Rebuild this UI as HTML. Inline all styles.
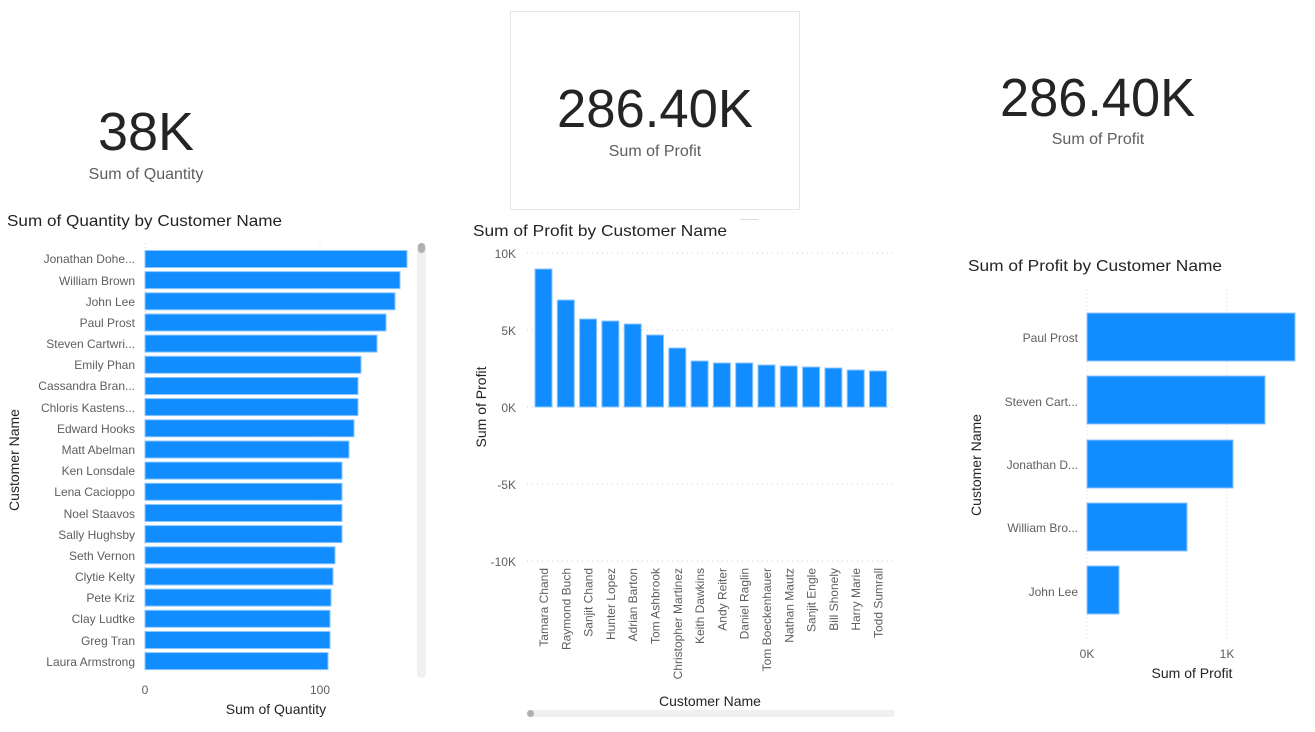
<!DOCTYPE html>
<html><head><meta charset="utf-8"><style>
html,body{margin:0;padding:0;background:#fff;}
svg{display:block;font-family:"Liberation Sans",sans-serif;}
</style></head><body>
<svg width="1315" height="732" viewBox="0 0 1315 732" xmlns="http://www.w3.org/2000/svg">
<text x="98" y="150" font-size="54" fill="#252423" textLength="96" lengthAdjust="spacingAndGlyphs">38K</text>
<text x="146" y="179" font-size="16" fill="#605e5c" text-anchor="middle">Sum of Quantity</text>
<rect x="510.5" y="11.5" width="289" height="198" fill="none" stroke="#e6e6e6"/>
<text x="557" y="127" font-size="54" fill="#252423" textLength="196" lengthAdjust="spacingAndGlyphs">286.40K</text>
<text x="655" y="156" font-size="16" fill="#605e5c" text-anchor="middle">Sum of Profit</text>
<line x1="740" y1="219.5" x2="758" y2="219.5" stroke="#ddd"/>
<text x="1000" y="116" font-size="54" fill="#252423" textLength="195" lengthAdjust="spacingAndGlyphs">286.40K</text>
<text x="1098" y="144" font-size="16" fill="#605e5c" text-anchor="middle">Sum of Profit</text>

<text x="7" y="226" font-size="16" fill="#252423" textLength="275" lengthAdjust="spacingAndGlyphs">Sum of Quantity by Customer Name</text>
<g stroke="#ddd" stroke-dasharray="1,3"><line x1="145" y1="243" x2="145" y2="673"/><line x1="320" y1="243" x2="320" y2="673"/></g>
<g fill="#118dff" stroke="#8cc6ff" stroke-width="1">
<rect x="145" y="250.5" width="262" height="17"/>
<rect x="145" y="271.6" width="255" height="17"/>
<rect x="145" y="292.8" width="250" height="17"/>
<rect x="145" y="314" width="241" height="17"/>
<rect x="145" y="335.1" width="232" height="17"/>
<rect x="145" y="356.3" width="216" height="17"/>
<rect x="145" y="377.5" width="213" height="17"/>
<rect x="145" y="398.6" width="213" height="17"/>
<rect x="145" y="419.8" width="209" height="17"/>
<rect x="145" y="441" width="204" height="17"/>
<rect x="145" y="462.1" width="197" height="17"/>
<rect x="145" y="483.3" width="197" height="17"/>
<rect x="145" y="504.5" width="197" height="17"/>
<rect x="145" y="525.6" width="197" height="17"/>
<rect x="145" y="546.8" width="190" height="17"/>
<rect x="145" y="568" width="188" height="17"/>
<rect x="145" y="589.1" width="186" height="17"/>
<rect x="145" y="610.3" width="185" height="17"/>
<rect x="145" y="631.5" width="185" height="17"/>
<rect x="145" y="652.6" width="183" height="17"/>
</g>
<g font-size="12" fill="#605e5c" text-anchor="end">
<text x="135" y="263">Jonathan Dohe...</text>
<text x="135" y="285">William Brown</text>
<text x="135" y="306">John Lee</text>
<text x="135" y="327">Paul Prost</text>
<text x="135" y="348">Steven Cartwri...</text>
<text x="135" y="369">Emily Phan</text>
<text x="135" y="390">Cassandra Bran...</text>
<text x="135" y="412">Chloris Kastens...</text>
<text x="135" y="433">Edward Hooks</text>
<text x="135" y="454">Matt Abelman</text>
<text x="135" y="475">Ken Lonsdale</text>
<text x="135" y="496">Lena Cacioppo</text>
<text x="135" y="518">Noel Staavos</text>
<text x="135" y="539">Sally Hughsby</text>
<text x="135" y="560">Seth Vernon</text>
<text x="135" y="581">Clytie Kelty</text>
<text x="135" y="602">Pete Kriz</text>
<text x="135" y="623">Clay Ludtke</text>
<text x="135" y="645">Greg Tran</text>
<text x="135" y="666">Laura Armstrong</text>
</g>
<rect x="417" y="243" width="9" height="435" rx="4" fill="#f0f0f0"/>
<rect x="418" y="243" width="7" height="10" rx="3.5" fill="#b0b0b0"/>
<text x="145" y="694" font-size="12" fill="#605e5c" text-anchor="middle">0</text>
<text x="320" y="694" font-size="12" fill="#605e5c" text-anchor="middle">100</text>
<text x="276" y="714" font-size="14" fill="#252423" text-anchor="middle">Sum of Quantity</text>
<text transform="translate(19,460) rotate(-90)" font-size="14" fill="#252423" text-anchor="middle">Customer Name</text>

<text x="473" y="236" font-size="16" fill="#252423" textLength="254" lengthAdjust="spacingAndGlyphs">Sum of Profit by Customer Name</text>
<g stroke="#ccc" stroke-dasharray="1,4">
<line x1="527" y1="253" x2="895" y2="253"/><line x1="527" y1="330" x2="895" y2="330"/><line x1="527" y1="407" x2="895" y2="407"/><line x1="527" y1="484" x2="895" y2="484"/><line x1="527" y1="561" x2="895" y2="561"/>
</g>
<g font-size="12" fill="#605e5c" text-anchor="end">
<text x="516" y="258">10K</text><text x="516" y="335">5K</text><text x="516" y="412">0K</text><text x="516" y="489">-5K</text><text x="516" y="566">-10K</text>
</g>
<g fill="#118dff" stroke="#8cc6ff" stroke-width="1">
<rect x="535" y="269" width="17" height="138"/>
<rect x="557.3" y="300" width="17" height="107"/>
<rect x="579.6" y="319" width="17" height="88"/>
<rect x="601.9" y="321" width="17" height="86"/>
<rect x="624.2" y="324" width="17" height="83"/>
<rect x="646.5" y="335" width="17" height="72"/>
<rect x="668.8" y="348" width="17" height="59"/>
<rect x="691.1" y="361" width="17" height="46"/>
<rect x="713.4" y="363" width="17" height="44"/>
<rect x="735.7" y="363" width="17" height="44"/>
<rect x="758" y="365" width="17" height="42"/>
<rect x="780.3" y="366" width="17" height="41"/>
<rect x="802.6" y="367" width="17" height="40"/>
<rect x="824.9" y="368" width="17" height="39"/>
<rect x="847.2" y="370" width="17" height="37"/>
<rect x="869.5" y="371" width="17" height="36"/>
</g>
<g font-size="12" fill="#605e5c" text-anchor="end">
<text transform="translate(548,568) rotate(-90)">Tamara Chand</text>
<text transform="translate(570.3,568) rotate(-90)">Raymond Buch</text>
<text transform="translate(592.6,568) rotate(-90)">Sanjit Chand</text>
<text transform="translate(614.9,568) rotate(-90)">Hunter Lopez</text>
<text transform="translate(637.2,568) rotate(-90)">Adrian Barton</text>
<text transform="translate(659.5,568) rotate(-90)">Tom Ashbrook</text>
<text transform="translate(681.8,568) rotate(-90)">Christopher Martinez</text>
<text transform="translate(704.1,568) rotate(-90)">Keith Dawkins</text>
<text transform="translate(726.4,568) rotate(-90)">Andy Reiter</text>
<text transform="translate(748.7,568) rotate(-90)">Daniel Raglin</text>
<text transform="translate(771,568) rotate(-90)">Tom Boeckenhauer</text>
<text transform="translate(793.3,568) rotate(-90)">Nathan Mautz</text>
<text transform="translate(815.6,568) rotate(-90)">Sanjit Engle</text>
<text transform="translate(837.9,568) rotate(-90)">Bill Shonely</text>
<text transform="translate(860.2,568) rotate(-90)">Harry Marie</text>
<text transform="translate(882.5,568) rotate(-90)">Todd Sumrall</text>
</g>
<text x="710" y="706" font-size="14" fill="#252423" text-anchor="middle">Customer Name</text>
<text transform="translate(486,407) rotate(-90)" font-size="14" fill="#252423" text-anchor="middle">Sum of Profit</text>
<rect x="527" y="710" width="368" height="7" rx="3.5" fill="#f0f0f0"/>
<circle cx="530.5" cy="713.5" r="3.5" fill="#b0b0b0"/>

<text x="968" y="271" font-size="16" fill="#252423" textLength="254" lengthAdjust="spacingAndGlyphs">Sum of Profit by Customer Name</text>
<g stroke="#ddd" stroke-dasharray="1,3"><line x1="1087" y1="290" x2="1087" y2="640"/><line x1="1227" y1="290" x2="1227" y2="640"/></g>
<g fill="#118dff" stroke="#8cc6ff" stroke-width="1">
<rect x="1087" y="313" width="208" height="48"/>
<rect x="1087" y="376" width="178" height="48"/>
<rect x="1087" y="440" width="146" height="48"/>
<rect x="1087" y="503" width="100" height="48"/>
<rect x="1087" y="566" width="32" height="48"/>
</g>
<g font-size="12" fill="#605e5c" text-anchor="end">
<text x="1078" y="342">Paul Prost</text>
<text x="1078" y="406">Steven Cart...</text>
<text x="1078" y="469">Jonathan D...</text>
<text x="1078" y="532">William Bro...</text>
<text x="1078" y="596">John Lee</text>
</g>
<text x="1087" y="658" font-size="12" fill="#605e5c" text-anchor="middle">0K</text>
<text x="1227" y="658" font-size="12" fill="#605e5c" text-anchor="middle">1K</text>
<text x="1192" y="678" font-size="14" fill="#252423" text-anchor="middle">Sum of Profit</text>
<text transform="translate(981,465) rotate(-90)" font-size="14" fill="#252423" text-anchor="middle">Customer Name</text>
</svg>
</body></html>
